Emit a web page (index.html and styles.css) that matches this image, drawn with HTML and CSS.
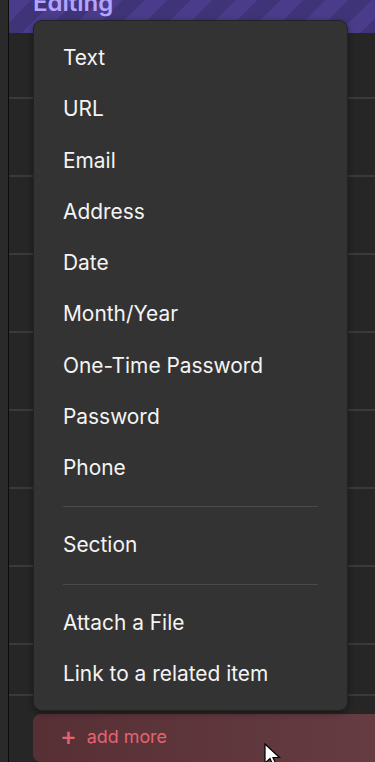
FILE: index.html
```html
<!DOCTYPE html>
<html lang="en">
<head>
  <meta charset="UTF-8">
  <meta name="viewport" content="width=device-width, initial-scale=1.0">
  <title>Editing</title>
  <link rel="stylesheet" href="styles.css">
</head>
<body>
  <div class="app">
    <div class="rail"></div>
    <div class="main">
      <div class="header">
        <h1>Editing</h1>
      </div>
      <div class="fields">
        <div class="row first"></div>
        <div class="row"></div>
        <div class="row"></div>
        <div class="row"></div>
        <div class="row"></div>
        <div class="row"></div>
        <div class="row"></div>
        <div class="row"></div>
        <div class="row last"></div>
      </div>
      <button class="add-more"><span class="plus">+</span> add more</button>
    </div>

    <div class="menu">
      <div class="menu-item">Text</div>
      <div class="menu-item">URL</div>
      <div class="menu-item">Email</div>
      <div class="menu-item">Address</div>
      <div class="menu-item">Date</div>
      <div class="menu-item">Month/Year</div>
      <div class="menu-item">One-Time Password</div>
      <div class="menu-item">Password</div>
      <div class="menu-item">Phone</div>
      <hr class="menu-sep">
      <div class="menu-item">Section</div>
      <hr class="menu-sep">
      <div class="menu-item">Attach a File</div>
      <div class="menu-item">Link to a related item</div>
    </div>

    <svg class="cursor" width="18" height="26" viewBox="0 0 18 26">
      <path d="M1 1 L1 20 L6 15.5 L9.5 23.5 L12.5 22.2 L9 14.5 L15.5 14.5 Z" fill="#fff" stroke="#000" stroke-width="1.2"/>
    </svg>
  </div>
</body>
</html>
```

FILE: styles.css
```css
body {
  margin: 0;
  padding: 0;
  background-color: #262626;
  font-family: Inter, "Noto Sans", sans-serif;
  color: #fff;
  overflow: hidden;
}
.app {
  position: relative;
  display: flex;
  height: 762px;
  overflow: hidden;
}
.rail {
  width: 8px;
  background-color: #2a2a2a;
  border-right: 1px solid #0c0c0c;
  flex-shrink: 0;
}
.main {
  flex: 1;
  display: flex;
  flex-direction: column;
  background-color: #262626;
}
.header {
  height: 33px;
  flex-shrink: 0;
  background-color: #43367f;
  background-image: repeating-linear-gradient(135deg, #4a3c8a 0 16px, #403479 16px 32px);
  display: flex;
  align-items: flex-end;
  padding-left: 24px;
  overflow: hidden;
}
.header h1 {
  margin: 0 0 16px;
  font-size: 24px;
  font-weight: 600;
  color: #b3a4ff;
}
.fields {
  display: flex;
  flex-direction: column;
}
.row {
  height: 76px;
  border-bottom: 2px solid #3a3a3a;
}
.row.first {
  height: 64px;
}
.row.last {
  height: 49px;
}
.add-more {
  margin: 18px 0 0 24px;
  height: 60px;
  border: none;
  border-radius: 8px 0 0 8px;
  background: linear-gradient(90deg, #573035, #643c41);
  color: #e46372;
  font-family: Inter, "Noto Sans", sans-serif;
  font-size: 17.9px;
  text-align: left;
  padding: 0 0 4px 27px;
}
.plus {
  font-size: 25px;
  font-weight: 500;
  margin-right: 5px;
  vertical-align: -2px;
}
.menu {
  position: absolute;
  left: 33px;
  top: 20px;
  width: 315px;
  box-sizing: border-box;
  height: 691px;
  padding: 11px 29px 0;
  background-color: #333333;
  border: 1px solid #232323;
  border-radius: 9px;
  box-shadow: 0 2px 6px rgba(0, 0, 0, 0.4);
}
.menu-item {
  height: 51.25px;
  line-height: 51.25px;
  font-size: 20.9px;
  color: #f4f4f4;
}
.menu-sep {
  margin: 13px 0 12px;
  border: none;
  border-top: 1px solid #4a4a4a;
  width: 255px;
}
.cursor {
  position: absolute;
  left: 264px;
  top: 743px;
}
```
